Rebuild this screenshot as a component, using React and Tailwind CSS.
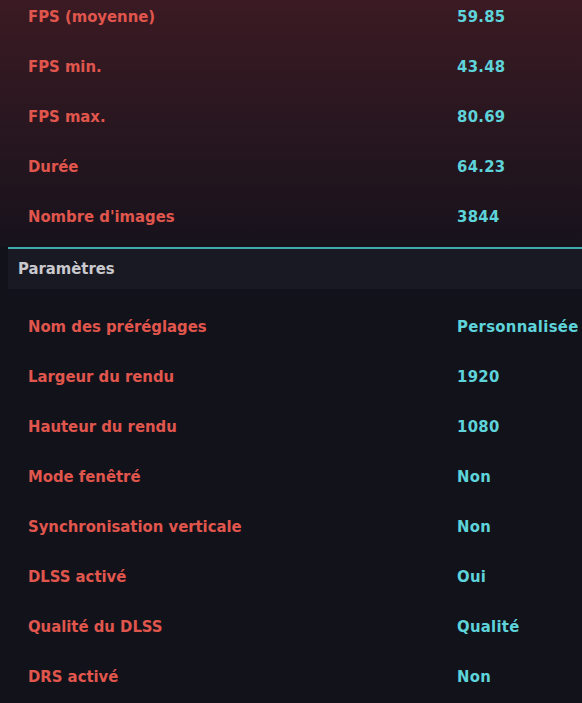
const STATS = [
  ['FPS (moyenne)', '59.85'],
  ['FPS min.', '43.48'],
  ['FPS max.', '80.69'],
  ['Durée', '64.23'],
  ["Nombre d'images", '3844'],
];

const SETTINGS = [
  ['Nom des préréglages', 'Personnalisée'],
  ['Largeur du rendu', '1920'],
  ['Hauteur du rendu', '1080'],
  ['Mode fenêtré', 'Non'],
  ['Synchronisation verticale', 'Non'],
  ['DLSS activé', 'Oui'],
  ['Qualité du DLSS', 'Qualité'],
  ['DRS activé', 'Non'],
];

function Row({ label, value }) {
  return (
    <div className="flex items-center h-[50px] pl-[28px]">
      <span className="w-[429px] shrink-0 text-[#e0564d]">{label}</span>
      <span className="text-[#5ed3da] whitespace-nowrap tracking-[0.3px]">{value}</span>
    </div>
  );
}

export default function App() {
  return (
    <div
      className="w-[582px] h-[703px] overflow-hidden bg-[#12121b] text-[16.5px] font-bold leading-none"
      style={{ fontFamily: '"DejaVu Sans Condensed", "Liberation Sans Narrow", sans-serif' }}
    >
      <div className="-mt-[8px] h-[255px] bg-gradient-to-b from-[#3c1a23] to-[#17121c]">
        {STATS.map(([l, v]) => (
          <Row key={l} label={l} value={v} />
        ))}
      </div>
      <div className="ml-[8px] border-t-2 border-[#3fa9ad] bg-[#191923] h-[42px] flex items-center pl-[10px]">
        <span className="text-[#c9c9cd]">Paramètres</span>
      </div>
      <div className="pt-[13px]">
        {SETTINGS.map(([l, v]) => (
          <Row key={l} label={l} value={v} />
        ))}
      </div>
    </div>
  );
}
